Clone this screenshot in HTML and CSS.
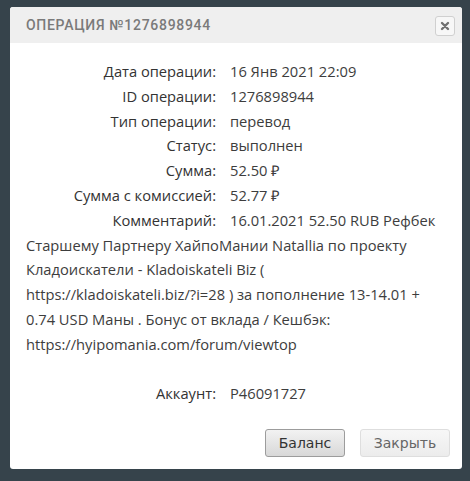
FILE: index.html
```html
<!DOCTYPE html>
<html lang="ru">
<head>
<meta charset="utf-8">
<link rel="stylesheet" href="styles.css">
</head>
<body>
<div class="dialog">
  <div class="dialog-header">
    <span class="dialog-title">Операция №1276898944</span>
    <button class="close-btn" aria-label="Закрыть">
      <svg width="10" height="10" viewBox="0 0 10 10"><path d="M2 2 L8 8 M8 2 L2 8" stroke="#707070" stroke-width="2.4" stroke-linecap="round"/></svg>
    </button>
  </div>
  <div class="dialog-body">
    <div class="row"><span class="label">Дата операции:</span>16 Янв 2021 22:09</div>
    <div class="row"><span class="label">ID операции:</span>1276898944</div>
    <div class="row"><span class="label">Тип операции:</span>перевод</div>
    <div class="row"><span class="label">Статус:</span>выполнен</div>
    <div class="row"><span class="label">Сумма:</span>52.50 ₽</div>
    <div class="row"><span class="label">Сумма с комиссией:</span>52.77 ₽</div>
    <div class="row"><span class="label">Комментарий:</span>16.01.2021 52.50 RUB Рефбек Старшему Партнеру ХайпоМании Natallia по проекту Кладоискатели - Kladoiskateli Biz ( <span class="nw">https://kladoiskateli.biz/?i=28</span> ) за пополнение 13-14.01 + 0.74 USD Маны . Бонус от вклада / Кешбэк: <span class="nw">https://hyipomania.com/forum/viewtop</span></div>
    <div class="row spacer"></div>
    <div class="row"><span class="label">Аккаунт:</span>P46091727</div>
  </div>
  <div class="dialog-footer">
    <button class="btn btn-primary">Баланс</button>
    <button class="btn btn-light">Закрыть</button>
  </div>
</div>
</body>
</html>
```
FILE: styles.css
```css
html, body {
  margin: 0;
  padding: 0;
}
body {
  background: #36434b;
  width: 470px;
  height: 481px;
  overflow: hidden;
}
.dialog {
  margin: 7px 0 0 10px;
  width: 452px;
  height: 462px;
  background: #fff;
  border-radius: 3px;
  display: flex;
  flex-direction: column;
  overflow: hidden;
}
.dialog-header {
  height: 36px;
  background: #efefef;
  display: flex;
  align-items: center;
  justify-content: space-between;
  padding: 0 7px 0 16px;
}
.dialog-title {
  font-family: Roboto, sans-serif;
  font-size: 14px;
  font-weight: 500;
  letter-spacing: 0.7px;
  text-transform: uppercase;
  color: #7a7a7a;
}
.close-btn {
  width: 20px;
  height: 20px;
  padding: 0;
  border: 1px solid #d0d0d0;
  border-radius: 3px;
  background: #f7f7f7;
  display: flex;
  align-items: center;
  justify-content: center;
  margin-top: 2px;
}
.dialog-body {
  padding: 16px 16px 0 16px;
  font-family: "Open Sans", sans-serif;
  font-size: 14.7px;
  line-height: 24.8px;
  color: #3d3d3d;
}
.row {
  min-height: 24.8px;
}
.nw {
  white-space: nowrap;
}
.label {
  display: inline-block;
  width: 190px;
  margin-right: 14px;
  text-align: right;
  color: #333;
}
.dialog-footer {
  display: flex;
  justify-content: flex-end;
  gap: 15px;
  padding: 23px 12px 0 0;
}
.btn {
  height: 28px;
  font-family: "DejaVu Sans", sans-serif;
  font-size: 14px;
  border-radius: 3px;
  padding: 0;
}
.btn-primary {
  width: 80px;
  border: 1px solid #9c9c9c;
  background: linear-gradient(#f2f2f2, #d8d8d8);
  color: #333;
}
.btn-light {
  width: 90px;
  border: 1px solid #dedede;
  background: linear-gradient(#f7f7f7, #ececec);
  color: #666;
}
```
